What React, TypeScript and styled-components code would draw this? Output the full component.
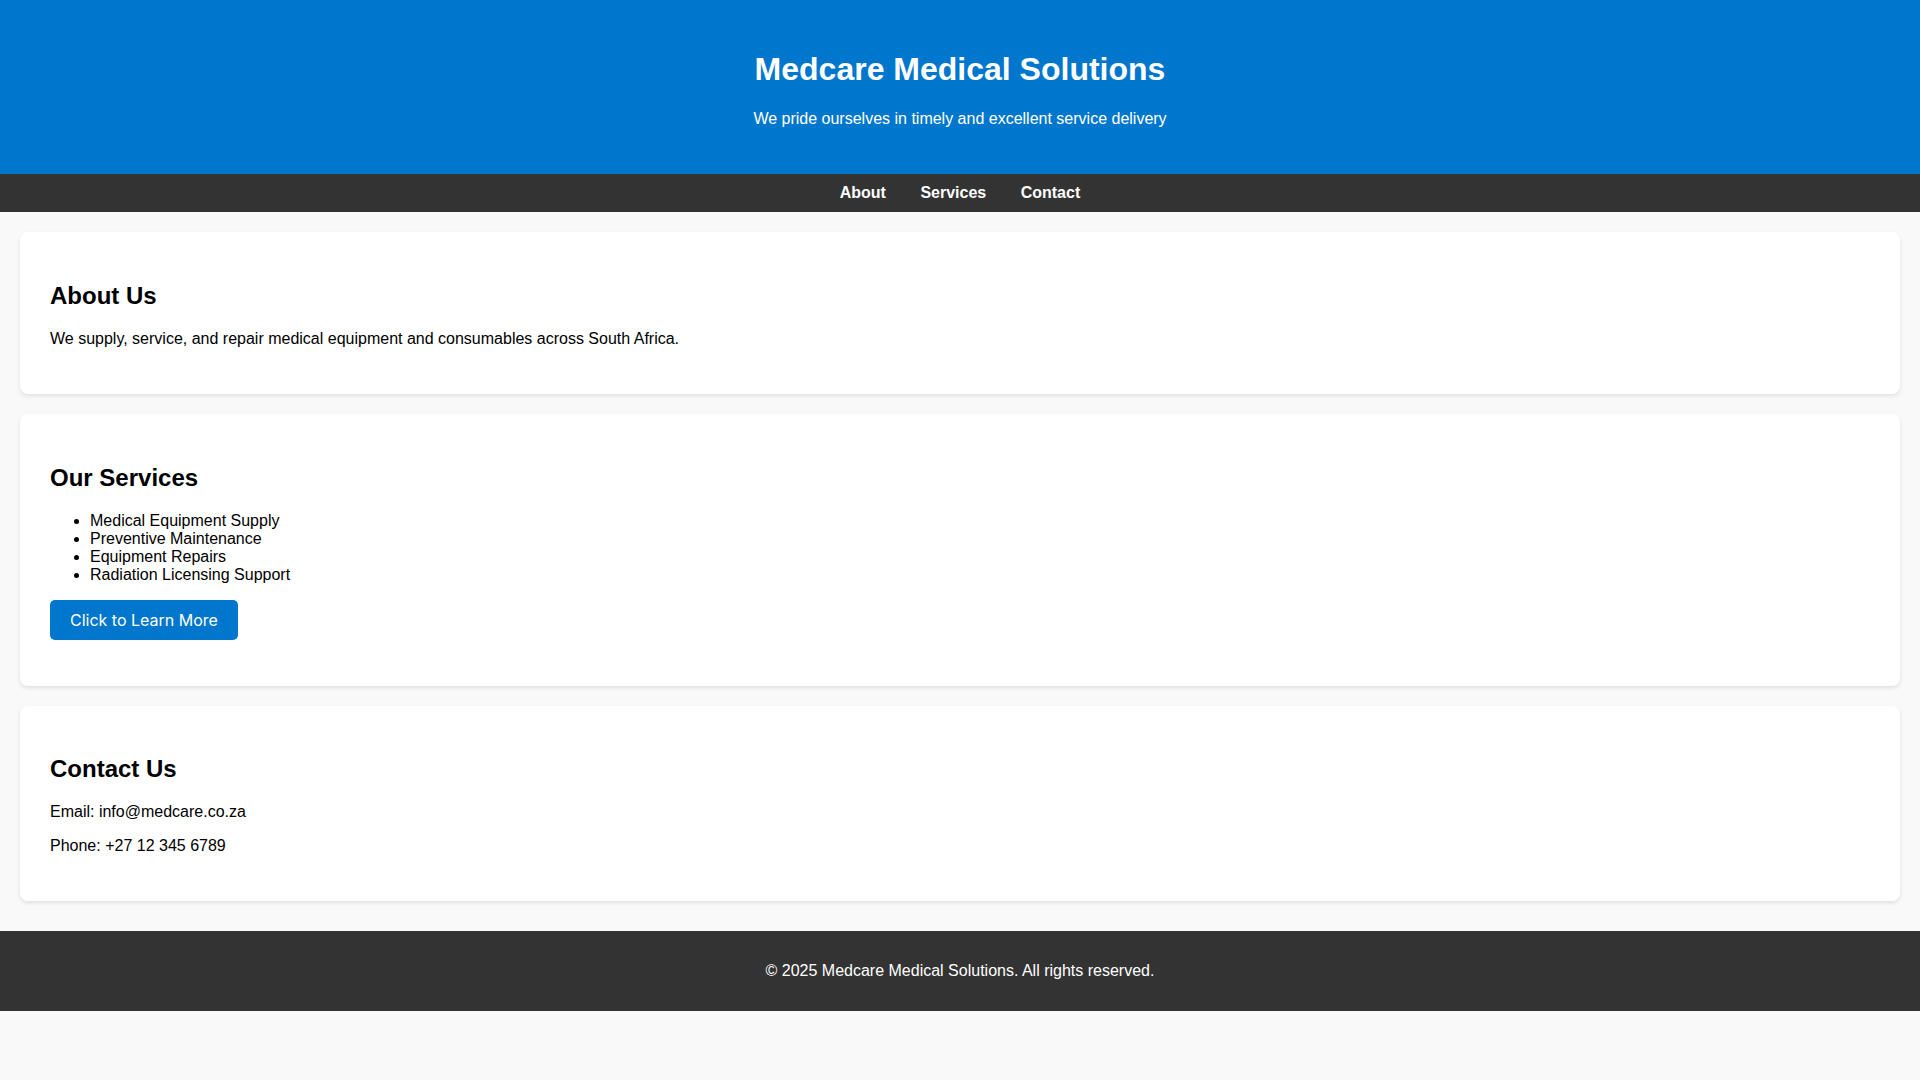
import React from 'react';
import styled, { createGlobalStyle } from 'styled-components';

const GlobalStyle = createGlobalStyle`
  body {
    margin: 0;
    background: #f9f9f9;
    color: #000;
    font-family: "Liberation Sans", Arial, sans-serif;
  }
`;

const Header = styled.header`
  background: #0077cc;
  color: #fff;
  text-align: center;
  padding: 30px;
`;

const Title = styled.h1`
  font-size: 32px;
  margin: 21.44px 0;
`;

const Tagline = styled.p`
  font-size: 16px;
  margin: 16px 0;
`;

const Nav = styled.nav`
  background: #333;
  text-align: center;
  padding: 10px;
`;

const NavLink = styled.a`
  color: #fff;
  font-weight: bold;
  text-decoration: none;
  margin: 0 15px;
`;

const Card = styled.section`
  background: #fff;
  margin: 20px;
  padding: 30px;
  border-radius: 8px;
  box-shadow: 0 2px 4px rgba(0, 0, 0, 0.1);
`;

const CardTitle = styled.h2`
  font-size: 24px;
  margin: 19.92px 0;
`;

const Text = styled.p`
  margin: 16px 0;
`;

const ServiceList = styled.ul`
  margin: 16px 0;
  padding-left: 40px;
`;

const Button = styled.button`
  background: #0077cc;
  color: #fff;
  border: none;
  border-radius: 5px;
  padding: 10px 20px;
  font-family: Inter, sans-serif;
  font-size: 16px;
  cursor: pointer;
`;

const Footer = styled.footer`
  background: #333;
  color: #fff;
  text-align: center;
  padding: 15px;
  margin-top: 30px;
`;

const services = [
  'Medical Equipment Supply',
  'Preventive Maintenance',
  'Equipment Repairs',
  'Radiation Licensing Support',
];

export default function App() {
  return (
    <>
      <GlobalStyle />
      <Header>
        <Title>Medcare Medical Solutions</Title>
        <Tagline>We pride ourselves in timely and excellent service delivery</Tagline>
      </Header>
      <Nav>
        <NavLink href="#about">About</NavLink>{' '}
        <NavLink href="#services">Services</NavLink>{' '}
        <NavLink href="#contact">Contact</NavLink>
      </Nav>
      <main>
        <Card id="about">
          <CardTitle>About Us</CardTitle>
          <Text>We supply, service, and repair medical equipment and consumables across South Africa.</Text>
        </Card>
        <Card id="services">
          <CardTitle>Our Services</CardTitle>
          <ServiceList>
            {services.map(s => <li key={s}>{s}</li>)}
          </ServiceList>
          <Text>
            <Button>Click to Learn More</Button>
          </Text>
        </Card>
        <Card id="contact">
          <CardTitle>Contact Us</CardTitle>
          <Text>Email: info@medcare.co.za</Text>
          <Text>Phone: +27 12 345 6789</Text>
        </Card>
      </main>
      <Footer>
        <Text>&copy; 2025 Medcare Medical Solutions. All rights reserved.</Text>
      </Footer>
    </>
  );
}
